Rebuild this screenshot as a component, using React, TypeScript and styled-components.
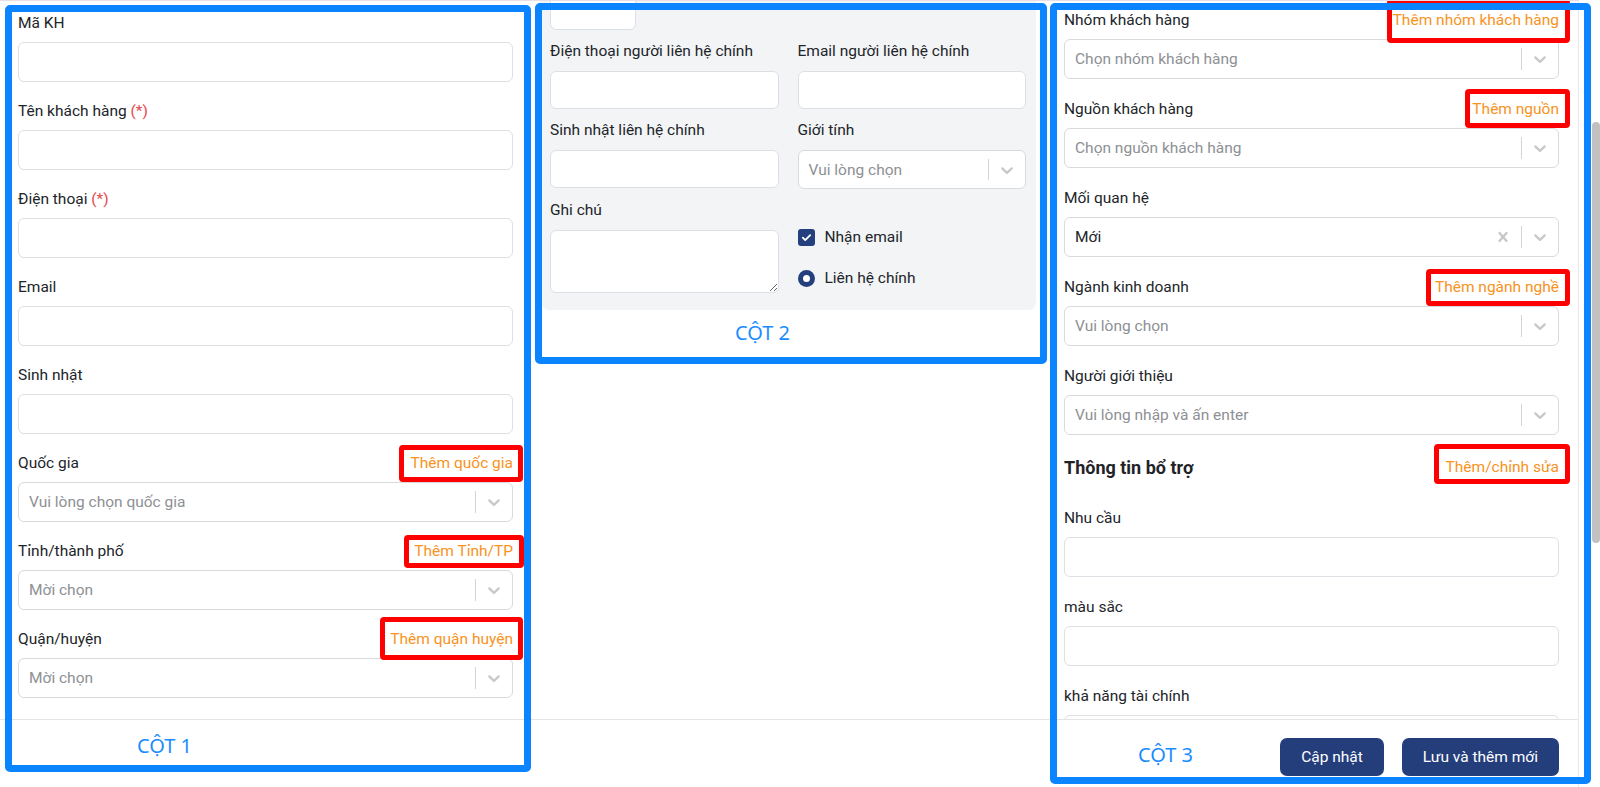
import React from 'react'
import styled, { createGlobalStyle } from 'styled-components'

const GlobalStyle = createGlobalStyle`
  html,
  body {
    margin: 0;
    padding: 0;
    background: #fff;
    overflow: hidden;
  }
  body {
    font-family: Roboto, 'Liberation Sans', Arial, sans-serif;
    color: #212529;
  }
  * {
    box-sizing: border-box;
  }
`

const Page = styled.div`
  position: relative;
  width: 1600px;
  height: 787px;
  display: flex;
  overflow: hidden;
`

const Modal = styled.div`
  width: 1579px;
  height: 787px;
  border-top: 1px solid #e8dee8;
  border-right: 1px solid #e8e8e8;
  display: flex;
  flex-direction: column;
`

const Body = styled.div`
  height: 718px;
  overflow: hidden;
  display: grid;
  grid-template-columns: repeat(3, 495px);
  column-gap: 28px;
  align-items: start;
  padding: 0 19px 0 18px;
`

const Column = styled.div<{ $offset: number; $gap?: number }>`
  margin-top: ${(p) => p.$offset}px;
  display: flex;
  flex-direction: column;
  gap: ${(p) => p.$gap ?? 18}px;
`

const Field = styled.div<{ $labelGap?: number }>`
  display: flex;
  flex-direction: column;
  gap: ${(p) => p.$labelGap ?? 8}px;
`

const LabelRow = styled.div`
  height: 22px;
  display: flex;
  align-items: center;
  justify-content: space-between;
  font-size: 15.5px;
  line-height: 22px;
  white-space: nowrap;
`

const Required = styled.span`
  color: #e5484d;
`

const AddLink = styled.span<{ $t: number; $r: number; $b: number; $l: number }>`
  position: relative;
  color: #f7931e;
  font-size: 15.5px;
  line-height: 22px;
  /* red highlight drawn over the screenshot */
  &::after {
    content: '';
    position: absolute;
    top: -${(p) => p.$t}px;
    right: -${(p) => p.$r}px;
    bottom: -${(p) => p.$b}px;
    left: -${(p) => p.$l}px;
    border: 5px solid #ff0000;
    border-radius: 4px;
    z-index: 2;
    pointer-events: none;
  }
`

const TextInput = styled.input<{ $h?: number }>`
  display: block;
  width: 100%;
  height: ${(p) => p.$h ?? 40}px;
  border: 1px solid #dcdfe4;
  border-radius: 6px;
  background: #fff;
  outline: none;
  font: inherit;
  padding: 0 10px;
`

const TextArea = styled.textarea`
  display: block;
  width: 100%;
  height: 63px;
  border: 1px solid #dcdfe4;
  border-radius: 6px;
  background: #fff;
  outline: none;
  resize: vertical;
  font: inherit;
`

const SelectBox = styled.div<{ $h?: number }>`
  height: ${(p) => p.$h ?? 40}px;
  border: 1px solid #d9dadc;
  border-radius: 6px;
  background: #fff;
  display: flex;
  align-items: center;
`

const SelectValue = styled.div<{ $placeholder?: boolean }>`
  flex: 1;
  padding: 0 10px;
  font-size: 15.5px;
  color: ${(p) => (p.$placeholder ? '#8e9094' : '#212529')};
  white-space: nowrap;
  overflow: hidden;
`

const Separator = styled.span`
  width: 1px;
  align-self: stretch;
  margin: 8px 0;
  background: #d4d4d4;
`

const Indicator = styled.div`
  padding: 8px;
  display: flex;
  color: #c8c8c8;
  svg {
    width: 20px;
    height: 20px;
    fill: currentColor;
  }
`

const Panel = styled.div`
  background: #f3f4f6;
  border-radius: 8px;
  padding: 9px 10px 17px 9px;
`

const PanelTop = styled.div`
  width: 86px;
  margin-bottom: 10px;
`

const PanelGrid = styled.div`
  display: grid;
  grid-template-columns: 1fr 1fr;
  column-gap: 19px;
  row-gap: 10px;
`

const Choices = styled.div`
  display: flex;
  flex-direction: column;
  gap: 21px;
  padding-top: 28px;
`

const Choice = styled.div`
  height: 20px;
  display: flex;
  align-items: center;
  gap: 10px;
  font-size: 15.5px;
`

const CheckBox = styled.span`
  width: 17px;
  height: 17px;
  border-radius: 3px;
  background: #243f7d;
  display: flex;
  align-items: center;
  justify-content: center;
`

const Radio = styled.span`
  width: 17px;
  height: 17px;
  border-radius: 50%;
  background: #243f7d;
  display: flex;
  align-items: center;
  justify-content: center;
  &::after {
    content: '';
    width: 7px;
    height: 7px;
    border-radius: 50%;
    background: #fff;
  }
`

const SectionRow = styled.div`
  height: 26px;
  margin-bottom: 27px;
  display: flex;
  align-items: center;
  justify-content: space-between;
`

const SectionTitle = styled.span`
  font-size: 18px;
  font-weight: 700;
  color: #1f2328;
`

const Footer = styled.div`
  flex: 1;
  border-top: 1px solid #e4e4e4;
  display: flex;
  justify-content: flex-end;
  align-items: flex-start;
  gap: 18px;
  padding: 18px 19px 0 0;
`

const Button = styled.button`
  height: 38px;
  padding: 0 21px;
  border: none;
  border-radius: 7px;
  background: #243e7c;
  color: #fff;
  font-family: Roboto, 'Liberation Sans', Arial, sans-serif;
  font-size: 15.5px;
`

const ScrollTrack = styled.div`
  width: 15px;
  margin-left: 6px;
  display: flex;
  flex-direction: column;
`

const ScrollThumb = styled.div`
  margin: 122px 0 0 7px;
  width: 8px;
  height: 421px;
  border-radius: 4px;
  background: #c1c1c1;
`

/* blue annotation frames drawn over the form */
const Callout = styled.div<{ $x: number; $y: number; $w: number; $h: number }>`
  position: absolute;
  left: ${(p) => p.$x}px;
  top: ${(p) => p.$y}px;
  width: ${(p) => p.$w}px;
  height: ${(p) => p.$h}px;
  border: 7px solid #0a84ff;
  border-radius: 5px;
  z-index: 5;
  pointer-events: none;
  display: flex;
  flex-direction: column;
  justify-content: flex-end;
`

const CalloutTag = styled.span<{ $left: number; $bottom: number }>`
  padding-left: ${(p) => p.$left}px;
  margin-bottom: ${(p) => p.$bottom}px;
  font-family: 'Noto Sans', 'Open Sans', sans-serif;
  font-size: 20px;
  line-height: 28px;
  color: #1a8cff;
`

const Chevron = () => (
  <svg viewBox="0 0 20 20">
    <path d="M4.516 7.548c0.436-0.446 1.043-0.481 1.576 0l3.908 3.747 3.908-3.747c0.533-0.481 1.141-0.446 1.574 0 0.436 0.445 0.408 1.197 0 1.615-0.406 0.418-4.695 4.502-4.695 4.502-0.217 0.223-0.502 0.335-0.787 0.335s-0.57-0.112-0.789-0.335c0 0-4.287-4.084-4.695-4.502s-0.436-1.17 0-1.615z" />
  </svg>
)

const Cross = () => (
  <svg viewBox="0 0 20 20">
    <path d="M14.348 14.849c-0.469 0.469-1.229 0.469-1.697 0l-2.651-3.030-2.651 3.029c-0.469 0.469-1.229 0.469-1.697 0-0.469-0.469-0.469-1.229 0-1.697l2.758-3.15-2.759-3.152c-0.469-0.469-0.469-1.228 0-1.697s1.228-0.469 1.697 0l2.652 3.031 2.651-3.031c0.469-0.469 1.228-0.469 1.697 0s0.469 1.229 0 1.697l-2.758 3.152 2.758 3.15c0.469 0.469 0.469 1.229 0 1.698z" />
  </svg>
)

type SelectProps = {
  value?: string
  placeholder?: string
  clearable?: boolean
  h?: number
}

const Select = ({ value, placeholder, clearable, h }: SelectProps) => (
  <SelectBox $h={h}>
    <SelectValue $placeholder={!value}>{value || placeholder}</SelectValue>
    {clearable && (
      <Indicator>
        <Cross />
      </Indicator>
    )}
    <Separator />
    <Indicator>
      <Chevron />
    </Indicator>
  </SelectBox>
)

type Box = [number, number, number, number]

type LabelProps = {
  text: string
  required?: boolean
  link?: string
  box?: Box
}

const Label = ({ text, required, link, box }: LabelProps) => (
  <LabelRow>
    <span>
      {text} {required && <Required>(*)</Required>}
    </span>
    {link && box && (
      <AddLink $t={box[0]} $r={box[1]} $b={box[2]} $l={box[3]}>
        {link}
      </AddLink>
    )}
  </LabelRow>
)

const App = () => {
  return (
    <>
      <GlobalStyle />
      <Page>
        <Modal>
          <Body>
            {/* cột 1 */}
            <Column $offset={11}>
              <Field>
                <Label text="Mã KH" />
                <TextInput />
              </Field>
              <Field>
                <Label text="Tên khách hàng" required />
                <TextInput />
              </Field>
              <Field>
                <Label text="Điện thoại" required />
                <TextInput />
              </Field>
              <Field>
                <Label text="Email" />
                <TextInput />
              </Field>
              <Field>
                <Label text="Sinh nhật" />
                <TextInput />
              </Field>
              <Field>
                <Label text="Quốc gia" link="Thêm quốc gia" box={[7, 10, 8, 12]} />
                <Select placeholder="Vui lòng chọn quốc gia" />
              </Field>
              <Field>
                <Label text="Tỉnh/thành phố" link="Thêm Tỉnh/TP" box={[5, 11, 6, 10]} />
                <Select placeholder="Mời chọn" />
              </Field>
              <Field>
                <Label text="Quận/huyện" link="Thêm quận huyện" box={[11, 10, 10, 10]} />
                <Select placeholder="Mời chọn" />
              </Field>
            </Column>

            {/* cột 2 */}
            <Column $offset={-18}>
              <Panel>
                <PanelTop>
                  <TextInput $h={38} />
                </PanelTop>
                <PanelGrid>
                  <Field $labelGap={9}>
                    <Label text="Điện thoại người liên hệ chính" />
                    <TextInput $h={38} />
                  </Field>
                  <Field $labelGap={9}>
                    <Label text="Email người liên hệ chính" />
                    <TextInput $h={38} />
                  </Field>
                  <Field $labelGap={9}>
                    <Label text="Sinh nhật liên hệ chính" />
                    <TextInput $h={38} />
                  </Field>
                  <Field $labelGap={9}>
                    <Label text="Giới tính" />
                    <Select placeholder="Vui lòng chọn" h={39} />
                  </Field>
                  <Field $labelGap={9}>
                    <Label text="Ghi chú" />
                    <TextArea />
                  </Field>
                  <Choices>
                    <Choice>
                      <CheckBox>
                        <svg width="11" height="11" viewBox="0 0 12 12">
                          <path
                            d="M2 6.2l2.6 2.6L10 3.4"
                            fill="none"
                            stroke="#fff"
                            strokeWidth="2"
                            strokeLinecap="round"
                            strokeLinejoin="round"
                          />
                        </svg>
                      </CheckBox>
                      Nhận email
                    </Choice>
                    <Choice>
                      <Radio />
                      Liên hệ chính
                    </Choice>
                  </Choices>
                </PanelGrid>
              </Panel>
            </Column>

            {/* cột 3 */}
            <Column $offset={8} $gap={19}>
              <Field>
                <Label text="Nhóm khách hàng" link="Thêm nhóm khách hàng" box={[10, 11, 12, 6]} />
                <Select placeholder="Chọn nhóm khách hàng" />
              </Field>
              <Field>
                <Label text="Nguồn khách hàng" link="Thêm nguồn" box={[9, 11, 8, 7]} />
                <Select placeholder="Chọn nguồn khách hàng" />
              </Field>
              <Field>
                <Label text="Mối quan hệ" />
                <Select value="Mới" clearable />
              </Field>
              <Field>
                <Label text="Ngành kinh doanh" link="Thêm ngành nghề" box={[7, 11, 8, 9]} />
                <Select placeholder="Vui lòng chọn" />
              </Field>
              <Field>
                <Label text="Người giới thiệu" />
                <Select placeholder="Vui lòng nhập và ấn enter" />
              </Field>
              <div>
                <SectionRow>
                  <SectionTitle>Thông tin bổ trợ</SectionTitle>
                  <AddLink $t={12} $r={11} $b={6} $l={12}>
                    Thêm/chỉnh sửa
                  </AddLink>
                </SectionRow>
                <Field>
                  <Label text="Nhu cầu" />
                  <TextInput />
                </Field>
              </div>
              <Field>
                <Label text="màu sắc" />
                <TextInput />
              </Field>
              <Field>
                <Label text="khả năng tài chính" />
                <TextInput />
              </Field>
            </Column>
          </Body>
          <Footer>
            <Button type="button">Cập nhật</Button>
            <Button type="button">Lưu và thêm mới</Button>
          </Footer>
        </Modal>
        <ScrollTrack>
          <ScrollThumb />
        </ScrollTrack>

        <Callout $x={5} $y={5} $w={526} $h={767}>
          <CalloutTag $left={125} $bottom={5}>CỘT 1</CalloutTag>
        </Callout>
        <Callout $x={535} $y={3} $w={512} $h={361}>
          <CalloutTag $left={193} $bottom={10}>CỘT 2</CalloutTag>
        </Callout>
        <Callout $x={1050} $y={3} $w={541} $h={781}>
          <CalloutTag $left={81} $bottom={8}>CỘT 3</CalloutTag>
        </Callout>
      </Page>
    </>
  )
}

export default App
